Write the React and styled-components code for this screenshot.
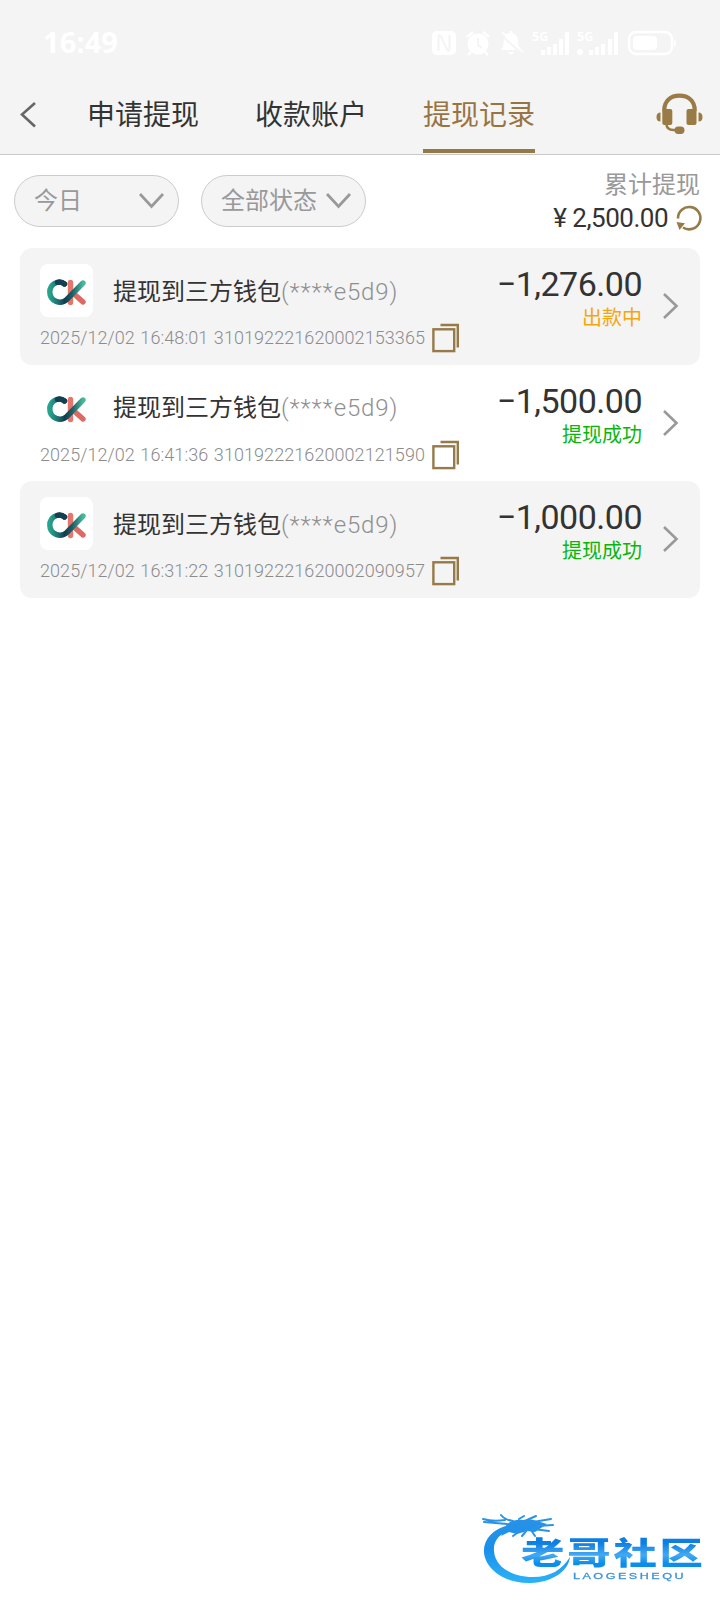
import { useState } from "react";
import styled, { createGlobalStyle, css } from "styled-components";

const GlobalStyle = createGlobalStyle`
	* {
		box-sizing: border-box;
		margin: 0;
		padding: 0;
	}
	body {
		background-color: #fff;
		font-family: Roboto, "Noto Sans CJK SC", sans-serif;
		color: #333;
	}
`;
const Page = styled.div`
	position: relative;
	width: 720px;
	height: 1610px;
	overflow: hidden;
	background-color: #fff;
`;
const Header = styled.header`
	height: 155px;
	background-color: #f4f4f4;
	border-bottom: 1px solid #c9c9c9;
`;
const StatusBar = styled.div`
	height: 75px;
	padding: 10px 41px 0 43px;
	display: flex;
	justify-content: space-between;
	align-items: center;
	color: #fff;
`;
const Clock = styled.div`
	font-family: "Noto Sans", sans-serif;
	font-size: 29px;
	font-weight: 700;
	line-height: 38px;
	padding-bottom: 2px;
	letter-spacing: 0.1px;
`;
const NavBar = styled.nav`
	height: 79px;
	display: flex;
	align-items: stretch;
	padding: 0 17px 0 20px;
`;
const BackButton = styled.button`
	width: 67px;
	border: none;
	background: none;
	display: flex;
	align-items: center;
	cursor: pointer;
`;
const Tabs = styled.div`
	flex: 1;
	display: flex;
	gap: 56px;
`;
const Tab = styled.button`
	border: none;
	background: none;
	font-family: inherit;
	font-size: 28px;
	line-height: 40px;
	padding: 4px 0 0;
	color: #333;
	border-top: 4px solid transparent;
	border-bottom: 4px solid transparent;
	margin-bottom: 1px;
	cursor: pointer;
	${(props) =>
		props.$active &&
		css`
			color: #987443;
			border-bottom-color: #937849;
		`}
`;
const Service = styled.div`
	display: flex;
	align-items: center;
	padding-bottom: 1px;
`;
const FilterBar = styled.section`
	height: 93px;
	display: flex;
	padding: 15px 18px 0 14px;
`;
const Select = styled.button`
	width: 165px;
	height: 52px;
	margin: 5px 22px 0 0;
	padding: 0 14px 0 19px;
	display: flex;
	justify-content: space-between;
	align-items: center;
	border: 1px solid #ccc;
	border-radius: 26px;
	background-color: #f4f4f4;
	color: #999;
	font-family: inherit;
	font-size: 24px;
	cursor: pointer;
`;
const SelectText = styled.span`
	line-height: 30px;
`;
const Summary = styled.div`
	margin-left: auto;
	display: flex;
	flex-direction: column;
	align-items: flex-end;
`;
const SummaryLabel = styled.div`
	font-size: 24px;
	line-height: 30px;
	padding-right: 2px;
	color: #999;
`;
const SummaryValue = styled.div`
	display: flex;
	align-items: center;
	height: 36px;
	font-size: 26px;
	letter-spacing: -0.5px;
	svg {
		margin-left: 8px;
	}
`;
const Currency = styled.span`
	font-size: 26px;
	margin-right: 6px;
`;
const List = styled.main`
	padding: 0 20px;
`;
const Card = styled.article`
	height: 116.6px;
	border-radius: 12px;
	padding: 0 20px;
	display: flex;
	justify-content: space-between;
	background-color: ${(props) => (props.$shaded ? "#f4f4f4" : "#fff")};
`;
const Info = styled.div`
	padding-top: 16px;
`;
const Wallet = styled.div`
	height: 53px;
	display: flex;
	align-items: center;
`;
const LogoBox = styled.div`
	width: 53px;
	height: 53px;
	margin-right: 20px;
	border-radius: 8px;
	background-color: #fff;
`;
const WalletName = styled.div`
	font-size: 24px;
	line-height: 30px;
	padding-top: 2px;
	white-space: nowrap;
`;
const Account = styled.span`
	color: #8f8f8f;
	font-weight: 300;
	letter-spacing: 0.85px;
`;
const Meta = styled.div`
	height: 30px;
	margin-top: 6px;
	display: flex;
	align-items: center;
	white-space: nowrap;
	font-size: 18px;
	font-weight: 300;
	color: #8c8c8c;
	svg {
		margin-left: 6px;
	}
`;
const MetaText = styled.span`
	width: 386px;
	padding-bottom: 1px;
	letter-spacing: 0.07px;
	word-spacing: 1px;
`;
const Result = styled.div`
	display: flex;
`;
const Amounts = styled.div`
	padding-top: 17px;
	text-align: right;
`;
const Amount = styled.div`
	font-size: 34px;
	line-height: 38px;
	letter-spacing: -0.5px;
`;
const Status = styled.div`
	font-size: 20px;
	line-height: 30px;
	color: ${(props) => (props.$pending ? "#f3a70d" : "#08b60c")};
`;
const Arrow = styled.div`
	display: flex;
	align-items: center;
	margin-left: 21px;
	padding-right: 1px;
`;
const Watermark = styled.div`
	position: absolute;
	left: 475px;
	bottom: 18px;
	width: 235px;
	height: 85px;
	filter: blur(0.6px);
`;

const records = [
	{
		time: "2025/12/02 16:48:01",
		order: "310192221620002153365",
		amount: "1,276.00",
		status: "出款中",
		pending: true,
	},
	{
		time: "2025/12/02 16:41:36",
		order: "310192221620002121590",
		amount: "1,500.00",
		status: "提现成功",
	},
	{
		time: "2025/12/02 16:31:22",
		order: "310192221620002090957",
		amount: "1,000.00",
		status: "提现成功",
	},
];

const tabs = ["申请提现", "收款账户", "提现记录"];

function StatusIcons() {
	return (
		<svg width="248" height="30" viewBox="0 0 248 30" fill="#fff">
			<rect x="1" y="3" width="24" height="24" rx="5" />
			<path
				d="M7.500 23V9q0-3 2.500-.500l6 13q2.500 2.500 2.500-.500V7"
				fill="none"
				stroke="#f4f4f4"
				strokeWidth="2"
			/>
			<circle cx="47" cy="16" r="10.5" />
			<path
				d="M36 9l6-5M58 9l-6-5M40 24l-3 3M54 24l3 3"
				stroke="#fff"
				strokeWidth="2.4"
			/>
			<path d="M47 10v7l4 3" fill="none" stroke="#f4f4f4" strokeWidth="2" />
			<path d="M70 22c3-3 2-6 3-11 1-4 3-6 5-6s0-2 2-2 1 2 3 3c3 1 4 4 4 7 0 4 1 6 3 9zM77 24h6q-3 5-6 0z" />
			<path d="M69 6l22 20" stroke="#f4f4f4" strokeWidth="2" />
			<path d="M71 4l21 20" stroke="#fff" strokeWidth="1.5" />
			<text
				x="101"
				y="13"
				fontFamily="Noto Sans, sans-serif"
				fontWeight="700"
				fontSize="12.500"
			>
				5G
			</text>
			<path d="M110 22h4v5h-4zM116 19h4v8h-4zM122 16h4v11h-4zM128 11h4v16h-4zM134 4h4v23h-4z" />
			<text
				x="146"
				y="13"
				fontFamily="Noto Sans, sans-serif"
				fontWeight="700"
				fontSize="12.500"
			>
				5G
			</text>
			<circle cx="149" cy="24" r="3" />
			<path d="M158 22h4v5h-4zM164 19h4v8h-4zM170 16h4v11h-4zM177 11h4v16h-4zM183 4h4v23h-4z" />
			<rect
				x="198"
				y="4"
				width="43"
				height="22"
				rx="7"
				fill="none"
				stroke="#fff"
				strokeWidth="2.4"
			/>
			<rect x="202" y="8" width="24" height="14" rx="4" />
			<path d="M243 11q4 4 0 9z" />
		</svg>
	);
}

function HeadsetIcon() {
	return (
		<svg width="47" height="42" viewBox="0 0 47 42" fill="#9a7b45">
			<path
				d="M8.300 18V17C8.300 8 14.500 2.600 23.500 2.600S38.700 8 38.700 17v1"
				fill="none"
				stroke="#9a7b45"
				strokeWidth="4.200"
			/>
			<rect x="6.300" y="16" width="10" height="16" rx="2" />
			<rect x="30.500" y="16" width="10" height="16" rx="2" />
			<path d="M4.500 19.500v9C1.800 28.500.500 27 .500 24s1.300-4.500 4-4.500zM42.500 19.500v9c2.700 0 4-1.500 4-4.500s-1.300-4.500-4-4.500z" />
			<path
				d="M10.500 31q0 6 7 6h4"
				fill="none"
				stroke="#9a7b45"
				strokeWidth="2.600"
			/>
			<rect x="18.500" y="33.500" width="10" height="7.500" rx="3.700" />
		</svg>
	);
}

function ChevronDown() {
	return (
		<svg width="25" height="16" viewBox="0 0 25 16">
			<path
				d="M1 1l11.500 12.500L24 1"
				fill="none"
				stroke="#999"
				strokeWidth="2.800"
			/>
		</svg>
	);
}

function RefreshIcon() {
	return (
		<svg width="26" height="26" viewBox="0 0 26 26">
			<path
				d="M2 13.500A11.200 11.200 0 1 1 7 22.500"
				fill="none"
				stroke="#967a48"
				strokeWidth="2.600"
			/>
			<path d="M.500 17l8.500 1.200-5.500 6.800z" fill="#967a48" />
		</svg>
	);
}

function CopyIcon() {
	return (
		<svg width="28" height="30" viewBox="0 0 28 30">
			<g fill="none" stroke="#967a48" strokeWidth="2.400">
				<rect x="1.400" y="6.300" width="20.800" height="21.800" />
				<path d="M8.500 2h17.300v22.500" />
			</g>
		</svg>
	);
}

function WalletLogo() {
	return (
		<svg width="53" height="53" viewBox="0 0 53 53">
			<defs>
				<linearGradient id="ring" x1="0" y1="0" x2="1" y2="0">
					<stop offset="0" stopColor="#27a38c" />
					<stop offset="0.250" stopColor="#1d6f75" />
					<stop offset="0.450" stopColor="#123c50" />
					<stop offset="0.680" stopColor="#1b6068" />
					<stop offset="1" stopColor="#48b899" />
				</linearGradient>
			</defs>
			<g fill="none" strokeLinecap="round" strokeWidth="5.400">
				<path d="M30.500 18.500v20" stroke="#e6766b" />
				<path d="M33.500 29.500l9.500 8.500" stroke="#dd6a62" />
				<path
					d="M24.500 20C18 15.500 9.800 20 9.800 28c0 9.500 11 13 17 7.500L43 19"
					stroke="url(#ring)"
				/>
				<path d="M17.500 18.300c3-.800 5-.100 7 1.700" stroke="#123f52" />
			</g>
		</svg>
	);
}

function SiteLogo() {
	return (
		<svg width="235" height="85" viewBox="0 0 235 85">
			<defs>
				<linearGradient
					id="blue"
					x1="0"
					y1="5"
					x2="0"
					y2="78"
					gradientUnits="userSpaceOnUse"
				>
					<stop offset="0" stopColor="#2a93e6" />
					<stop offset="0.500" stopColor="#1b8fea" />
					<stop offset="1" stopColor="#2bb5f8" />
				</linearGradient>
				<linearGradient id="letters" x1="0" y1="0" x2="0" y2="1">
					<stop offset="0.200" stopColor="#0d7ee2" />
					<stop offset="0.550" stopColor="#43a9f2" />
					<stop offset="0.800" stopColor="#0b8deb" />
				</linearGradient>
			</defs>
			<g fill="url(#blue)">
				<path d="M34 18C17 22 8 33 9 46c2 17 22 31 47 30 21-1 37-11 39-26-8 13-20 20-37 20-21 0-38-10-39-26-1-10 5-17 18-22z" />
				<path d="M32 17q7-5 16-4 7-2 14 1l10 3-6 4-6 4-8-1-10 3-8-2-8 4z" />
				<path
					d="M8 12q10 3 22 1M26 8q4 5 12 6M9 15q12 1 23 2M44 12l5-3M52 13l9-4M58 15l18-3M62 19l16-1M58 22l16 2M46 23l-8 6M52 23l-5 6M56 23l4 6"
					fill="none"
					stroke="#2a93e6"
					strokeWidth="2"
					strokeLinecap="round"
				/>
			</g>
			<text
				transform="translate(46 57) scale(1.400 1)"
				fontFamily="Liberation Sans, Noto Sans CJK SC, sans-serif"
				fontWeight="900"
				fontSize="31"
				textLength="130"
				fill="url(#letters)"
			>
				老哥社区
			</text>
			<text
				transform="translate(98 71.500) scale(1.400 1)"
				fontFamily="Liberation Sans, sans-serif"
				fontSize="9"
				textLength="79"
				fill="#3b94da"
				stroke="#3b94da"
				strokeWidth="0.300"
			>
				LAOGESHEQU
			</text>
		</svg>
	);
}

function RecordCard({ record, shaded }) {
	return (
		<Card $shaded={shaded}>
			<Info>
				<Wallet>
					<LogoBox>
						<WalletLogo />
					</LogoBox>
					<WalletName>
						提现到三方钱包<Account>(****e5d9)</Account>
					</WalletName>
				</Wallet>
				<Meta>
					<MetaText>
						{record.time} {record.order}
					</MetaText>
					<CopyIcon />
				</Meta>
			</Info>
			<Result>
				<Amounts>
					<Amount>−{record.amount}</Amount>
					<Status $pending={record.pending}>{record.status}</Status>
				</Amounts>
				<Arrow>
					<svg width="16" height="26" viewBox="0 0 16 26">
						<path
							d="M1 1l12.500 12L1 25"
							fill="none"
							stroke="#999"
							strokeWidth="2.600"
						/>
					</svg>
				</Arrow>
			</Result>
		</Card>
	);
}

function App() {
	const [active, setActive] = useState(2);
	return (
		<>
			<GlobalStyle />
			<Page>
				<Header>
					<StatusBar>
						<Clock>16:49</Clock>
						<StatusIcons />
					</StatusBar>
					<NavBar>
						<BackButton>
							<svg width="17" height="26" viewBox="0 0 17 26">
								<path
									d="M15 1L2 12.500 15 24.500"
									fill="none"
									stroke="#666"
									strokeWidth="2.600"
								/>
							</svg>
						</BackButton>
						<Tabs>
							{tabs.map((tab, i) => (
								<Tab
									key={tab}
									$active={i === active}
									onClick={() => setActive(i)}
								>
									{tab}
								</Tab>
							))}
						</Tabs>
						<Service>
							<HeadsetIcon />
						</Service>
					</NavBar>
				</Header>

				<FilterBar>
					<Select>
						<SelectText>今日</SelectText>
						<ChevronDown />
					</Select>
					<Select>
						<SelectText>全部状态</SelectText>
						<ChevronDown />
					</Select>
					<Summary>
						<SummaryLabel>累计提现</SummaryLabel>
						<SummaryValue>
							<Currency>¥</Currency>2,500.00
							<RefreshIcon />
						</SummaryValue>
					</Summary>
				</FilterBar>

				<List>
					{records.map((record, i) => (
						<RecordCard
							key={record.order}
							record={record}
							shaded={i % 2 === 0}
						/>
					))}
				</List>

				<Watermark>
					<SiteLogo />
				</Watermark>
			</Page>
		</>
	);
}

export default App;
